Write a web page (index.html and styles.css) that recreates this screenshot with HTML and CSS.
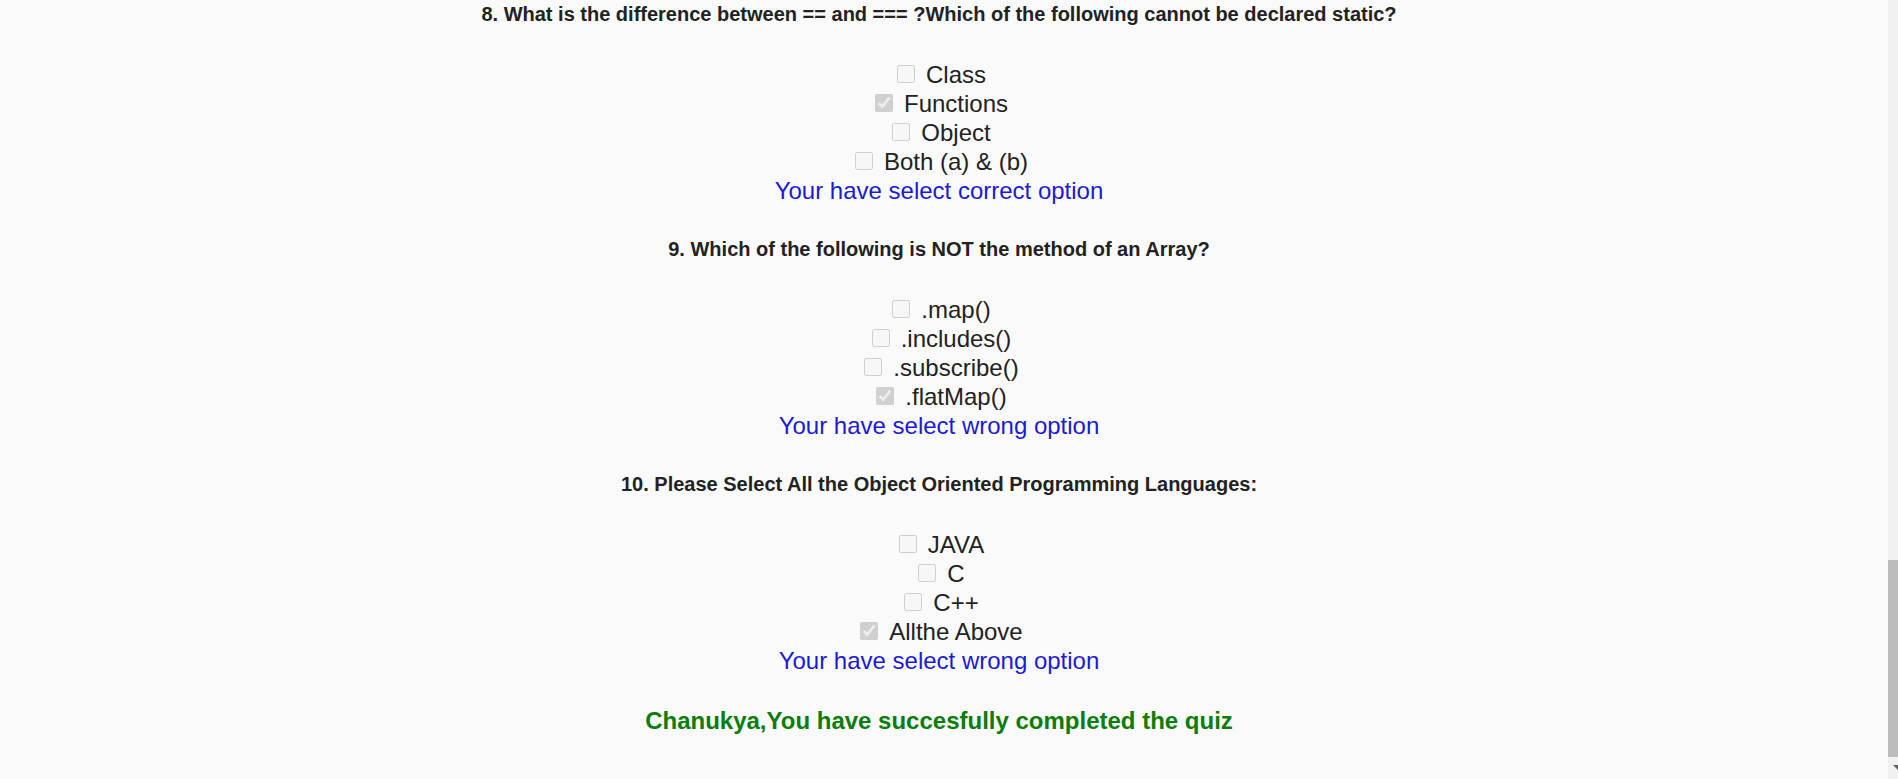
FILE: index.html
```html
<!DOCTYPE html>
<html lang="en">
<head>
<meta charset="utf-8">
<title>Quiz results</title>
<link rel="stylesheet" href="styles.css">
</head>
<body>
<main class="quiz">
  <section class="question">
    <h3 class="q-title">8. What is the difference between == and === ?Which of the following cannot be declared static?</h3>
    <div class="options">
      <div class="option"><input type="checkbox" disabled><span>Class</span></div>
      <div class="option"><input type="checkbox" disabled checked><span>Functions</span></div>
      <div class="option"><input type="checkbox" disabled><span>Object</span></div>
      <div class="option"><input type="checkbox" disabled><span>Both (a) &amp; (b)</span></div>
    </div>
    <p class="result">Your have select correct option</p>
  </section>
  <section class="question">
    <h3 class="q-title">9. Which of the following is NOT the method of an Array?</h3>
    <div class="options">
      <div class="option"><input type="checkbox" disabled><span>.map()</span></div>
      <div class="option"><input type="checkbox" disabled><span>.includes()</span></div>
      <div class="option"><input type="checkbox" disabled><span>.subscribe()</span></div>
      <div class="option"><input type="checkbox" disabled checked><span>.flatMap()</span></div>
    </div>
    <p class="result">Your have select wrong option</p>
  </section>
  <section class="question">
    <h3 class="q-title">10. Please Select All the Object Oriented Programming Languages:</h3>
    <div class="options">
      <div class="option"><input type="checkbox" disabled><span>JAVA</span></div>
      <div class="option"><input type="checkbox" disabled><span>C</span></div>
      <div class="option"><input type="checkbox" disabled><span>C++</span></div>
      <div class="option"><input type="checkbox" disabled checked><span>Allthe Above</span></div>
    </div>
    <p class="result">Your have select wrong option</p>
  </section>
  <h2 class="done">Chanukya,You have succesfully completed the quiz</h2>
</main>
<div class="scrollbar"><div class="thumb"></div><div class="arrow"></div></div>
</body>
</html>
```

FILE: styles.css
```css
html, body {
  margin: 0;
  height: 100%;
  overflow: hidden;
  background: #fafafa;
}
body {
  font-family: "Liberation Sans", Arial, sans-serif;
  color: #222;
}
.quiz {
  box-sizing: border-box;
  width: 1878px;
  padding-top: 3px;
  text-align: center;
}
.question {
  margin-bottom: 33px;
}
.q-title {
  margin: 0 0 35px;
  font-size: 20px;
  line-height: 22px;
  font-weight: bold;
  color: #222;
}
.option {
  padding-left: 5px;
  font-size: 24px;
  line-height: 29px;
  height: 29px;
  color: #222;
}
.option input {
  width: 18px;
  height: 18px;
  margin: 0 11px 1px 0;
  vertical-align: baseline;
}
.result {
  margin: 0;
  font-size: 24px;
  line-height: 29px;
  color: #1a1ad6;
}
.done {
  margin: 0;
  font-size: 24px;
  line-height: 26px;
  font-weight: bold;
  color: #0a7d0a;
}
.scrollbar {
  position: fixed;
  top: 0;
  right: 0;
  width: 10px;
  height: 100%;
  background: #f1f1f1;
}
.thumb {
  position: absolute;
  top: 560px;
  left: 0;
  width: 10px;
  height: 197px;
  background: #bcbcbc;
}
.arrow {
  position: absolute;
  top: 765px;
  left: 5px;
  width: 0;
  height: 0;
  border-left: 5px solid transparent;
  border-right: 5px solid transparent;
  border-top: 5px solid #606060;
}
```
